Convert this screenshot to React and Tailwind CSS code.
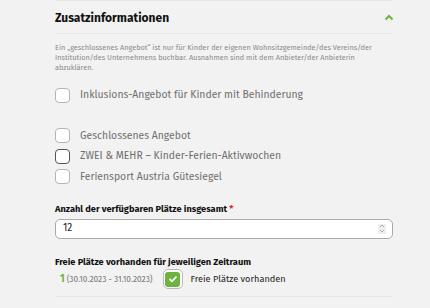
import React from "react";

const font = { fontFamily: "'Fira Sans', Lato, 'Noto Sans', sans-serif" };

function Box({ dark }) {
  return (
    <span
      className={`block w-[15px] h-[15px] shrink-0 rounded-[4px] bg-white border ${
        dark ? "border-[#555]" : "border-[#b5b5b5]"
      }`}
    />
  );
}

function Option({ label, dark }) {
  return (
    <label className="flex items-center gap-[10px] h-[20.5px]">
      <Box dark={dark} />
      <span className="text-[10.4px] text-[#6f6f6f]">{label}</span>
    </label>
  );
}

export default function App() {
  return (
    <div className="w-[430px] h-[308px] bg-[#f2f2f2] overflow-hidden" style={font}>
      <div className="mx-[55px] w-[338px]">
        <div className="border-t border-[#e6e6e6]" />
        <div className="flex items-center justify-between h-[33px] border-b border-[#e6e6e6]">
          <h2 className="text-[12px] font-bold text-[#111] pt-[2px]">Zusatzinformationen</h2>
          <svg width="10" height="7" viewBox="0 0 10 7" className="mr-[-1px]">
            <path d="M1.5 5.5 L5 2 L8.5 5.5" fill="none" stroke="#6cb33f" strokeWidth="2" />
          </svg>
        </div>
        <p className="mt-[9px] text-[7.35px] leading-[10px] text-[#8a8a8a]">
          Ein „geschlossenes Angebot“ ist nur für Kinder der eigenen Wohnsitzgemeinde/des Vereins/der
          Institution/des Unternehmens buchbar. Ausnahmen sind mit dem Anbieter/der Anbieterin
          abzuklären.
        </p>
        <div className="mt-[12px]">
          <Option label="Inklusions-Angebot für Kinder mit Behinderung" />
        </div>
        <div className="mt-[20px] flex flex-col">
          <Option label="Geschlossenes Angebot" />
          <Option label="ZWEI & MEHR – Kinder-Ferien-Aktivwochen" dark />
          <Option label="Feriensport Austria Gütesiegel" />
        </div>
        <div className="mt-[15px] text-[9.25px] font-bold text-[#111]">
          Anzahl der verfügbaren Plätze insgesamt <span className="text-[#e3262b]">*</span>
        </div>
        <div className="mt-[3px] h-[20px] flex items-center justify-between bg-white border border-[#aaa] rounded-[5px] pl-[7px] pr-[6px]">
          <span className="text-[10px] text-[#222]">12</span>
          <span className="flex flex-col items-center justify-center w-[8px] h-[10px] bg-[#eee] rounded-[1px]">
            <svg width="6" height="9" viewBox="0 0 6 9">
              <path d="M1 3 L3 1 L5 3 M1 6 L3 8 L5 6" fill="none" stroke="#999" strokeWidth="0.8" />
            </svg>
          </span>
        </div>
        <div className="mt-[16px] text-[9.25px] font-bold text-[#111]">
          Freie Plätze vorhanden für jeweiligen Zeitraum
        </div>
        <div className="mt-[0px] flex items-center h-[21px] pb-[6px] border-b border-[#e6e6e6] box-content">
          <span className="ml-[5px] text-[10px] font-bold text-[#6cb33f]">1</span>
          <span className="ml-[2px] text-[8.3px] text-[#777]">(30.10.2023 - 31.10.2023)</span>
          <span className="ml-[10px] flex items-center justify-center w-[20px] h-[20px] rounded-[5px] border border-[#bbb] bg-white">
            <span className="flex items-center justify-center w-[15px] h-[15px] rounded-[3px] bg-[#6cb33f]">
              <svg width="10" height="8" viewBox="0 0 10 8">
                <path d="M1.5 4 L4 6.3 L8.5 1.5" fill="none" stroke="#fff" strokeWidth="1.8" />
              </svg>
            </span>
          </span>
          <span className="ml-[8px] text-[9.2px] text-[#222]">Freie Plätze vorhanden</span>
        </div>
      </div>
    </div>
  );
}
